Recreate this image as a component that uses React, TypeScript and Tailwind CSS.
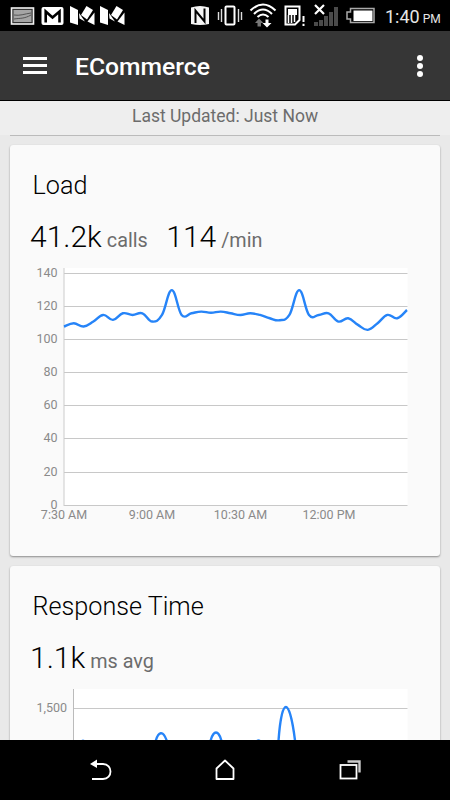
import type { ReactNode } from 'react';

type Point = [number, number];

// One sample every 10 minutes, starting at 7:30 AM
const loadSamples = [
  108, 110, 108, 111, 115, 112, 116, 115, 116, 111, 115, 130, 115, 116, 117, 116.3, 117, 116, 115, 116,
  115, 113, 111.8, 115, 130, 115, 115, 116, 111, 113, 109, 106, 110, 115, 113, 118,
];

const loadPoints: Point[] = loadSamples.map((value, i) => [64 + i * 9.8, 237.5 - value * 1.6571]);

const xLabels = [
  { x: 64, label: '7:30 AM' },
  { x: 152, label: '9:00 AM' },
  { x: 240.5, label: '10:30 AM' },
  { x: 329, label: '12:00 PM' },
];

// Catmull-Rom spline through all points
function smoothPath(points: Point[]) {
  let d = `M${points[0][0]} ${points[0][1]}`;
  for (let i = 0; i < points.length - 1; i++) {
    const p0 = points[i - 1] || points[i];
    const p1 = points[i];
    const p2 = points[i + 1];
    const p3 = points[i + 2] || p2;
    d += ` C${p1[0] + (p2[0] - p0[0]) / 5} ${p1[1] + (p2[1] - p0[1]) / 5} ${p2[0] - (p3[0] - p1[0]) / 5} ${p2[1] - (p3[1] - p1[1]) / 5} ${p2[0]} ${p2[1]}`;
  }
  return d;
}

function StatusBar() {
  return (
    <div className="h-[30px] shrink-0 bg-black flex items-center justify-between">
      <svg width="130" height="30" viewBox="0 0 130 30">
        <rect x="11.5" y="8" width="22" height="16" fill="#333" stroke="#f2f2f2" strokeWidth="1.6" />
        <rect x="13.5" y="10" width="18" height="12" fill="#a5a5a5" />
        <path d="M14 15c6 1 10-1 17-2M14 19c6-1 10 0 17-4" stroke="#555" fill="none" />
        <rect x="41.5" y="7" width="22" height="18" rx="2" fill="#fff" />
        <path d="M45.7 22.5V11.5L52.5 17.5L59.5 11.5V22.5" stroke="#000" strokeWidth="2.6" fill="none" />
        {[0, 30].map((dx) => (
          <g key={dx} transform={`translate(${dx} 0)`} fill="#fff">
            <path d="M70 6L78 10V25L70 22.5Z" />
            <path d="M86.5 6L93 10L87 19.500L81 15Z" />
            <path d="M79 13L85 21.500L79.500 18.500Z" />
            <path d="M94.5 12.5V25L87.500 21.500Z" />
          </g>
        ))}
      </svg>
      <svg width="190" height="30" viewBox="190 0 190 30" className="ml-auto">
        <path d="M191 7.500Q200 4.500 209 7.500V24Q200 26 191 24Z" fill="#f5f5f5" />
        <path d="M195.500 23V10.500L204.500 21.500V8.500" stroke="#000" strokeWidth="2" fill="none" />
        <rect x="225.500" y="6.500" width="9" height="18" rx="1" stroke="#fff" strokeWidth="2" fill="none" />
        <path d="M221.500 9v13M218.500 12v8M238.500 9v13M241.500 12v8" stroke="#ddd" strokeWidth="1.4" />
        <g stroke="#fff" strokeWidth="2.100" fill="none">
          <path d="M250.500 10.500Q263 -1.500 275.500 10.500" />
          <path d="M254 14Q263 5 272 14" />
          <path d="M257.500 17Q263 12 268.500 17" />
        </g>
        <path d="M259 18.500L263.500 23H261V26.500H257.500V23H255Z" fill="#777" />
        <path d="M267 27.500L271.500 23H268.500V19.500H265.500V23H262.500Z" fill="#fff" />
        <path d="M285.500 6.500H299.500V20L295 24.500H285.500Z" stroke="#fff" strokeWidth="2" fill="none" />
        <rect x="288" y="9" width="9" height="6" fill="#fff" />
        <path d="M288.500 15v8M291.500 15v8M294.500 15v7" stroke="#fff" strokeWidth="1.500" />
        <path d="M303.500 16v6M303.500 23.800v2.200" stroke="#fff" strokeWidth="2" />
        <g fill="#4b4b4b">
          <rect x="314" y="22" width="4" height="4" />
          <rect x="319" y="20" width="4" height="6" />
          <rect x="324" y="16" width="4" height="10" />
          <rect x="329" y="12" width="4" height="14" />
          <rect x="334" y="7" width="4" height="19" />
        </g>
        <path d="M315 5L324 14M324 5L315 14" stroke="#fff" strokeWidth="2.200" />
        <path d="M350.500 8.500H374V22.500H350.500V19H347V12H350.500Z" stroke="#aaa" strokeWidth="1.500" fill="none" />
        <rect x="353.500" y="10.500" width="19" height="10.500" fill="#fff" />
      </svg>
      <div className="w-[70px] h-[30px] pl-[5px] leading-[33px] whitespace-nowrap text-[#e6e6e6]">
        <span className="text-[18px]">1:40</span>
        <span className="ml-[3px] text-[12px]">PM</span>
      </div>
    </div>
  );
}

function AppBar() {
  return (
    <header className="h-[71px] shrink-0 bg-[#363636] border-y border-black flex items-center">
      <button className="ml-[23px] w-6 flex flex-col gap-[4px]" aria-label="Menu">
        <span className="h-[3px] w-6 bg-white" />
        <span className="h-[3px] w-6 bg-white" />
        <span className="h-[3px] w-6 bg-white" />
      </button>
      <h1 className="ml-7 pt-[2px] text-[24.7px] font-medium text-white">ECommerce</h1>
      <button className="ml-auto mr-[27px] flex flex-col gap-[2px]" aria-label="More">
        <span className="size-[6px] rounded-full bg-white" />
        <span className="size-[6px] rounded-full bg-white" />
        <span className="size-[6px] rounded-full bg-white" />
      </button>
    </header>
  );
}

function Metric({ value, unit }: { value: string; unit: string }) {
  return (
    <div className="flex items-baseline gap-[5px]">
      <span className="text-[30px] leading-9 font-light text-black">{value}</span>
      <span className="text-[19.8px] text-[#6c6c6c]">{unit}</span>
    </div>
  );
}

function Card({ title, children }: { title: string; children: ReactNode }) {
  return (
    <section className="mx-[10px] h-[411px] shrink-0 overflow-hidden rounded-[3px] bg-[#fafafa] shadow-[0_1px_2px_rgba(0,0,0,0.4)]">
      <h2 className="pl-[22.5px] pt-[25px] text-[25.2px] leading-[32px] font-light text-black">{title}</h2>
      {children}
    </section>
  );
}

function LoadChart() {
  return (
    <svg width="430" height="270" viewBox="10 0 430 270" fontSize="12.5" fill="#8a8a8a">
      <rect x="64" y="0" width="343.500" height="237" fill="#fff" />
      {[0, 20, 40, 60, 80, 100, 120, 140].map((value) => {
        const y = Math.floor(237.2 - value * 1.6571) + 0.5;
        return (
          <g key={value}>
            <line x1="64" x2="407.500" y1={y} y2={y} stroke="#c8c8c8" />
            <text x="57.500" y={y + 3.5} textAnchor="end">{value}</text>
          </g>
        );
      })}
      <line x1="64" x2="64" y1="0" y2="238" stroke="#ccc" />
      <path d={smoothPath(loadPoints)} stroke="#2684f8" strokeWidth="2.400" fill="none" />
      {xLabels.map(({ x, label }) => (
        <text key={label} x={x} y="251.3" textAnchor="middle">{label}</text>
      ))}
    </svg>
  );
}

function ResponseChart() {
  return (
    <svg width="430" height="60" viewBox="10 0 430 60" fontSize="12.5" fill="#8a8a8a">
      <rect x="74" y="0" width="333.500" height="60" fill="#fff" />
      <line x1="74" x2="407.500" y1="19.500" y2="19.500" stroke="#c8c8c8" />
      <line x1="73.500" x2="73.500" y1="0" y2="60" stroke="#bbb" />
      <text x="67" y="23" textAnchor="end">1,500</text>
      <path
        d="M81 53Q83 50.500 85 53M154 60C157 41 164 37 169 60M209 60C212 38 220 38 223 60M256 53Q258.500 50 261 53M278 60C281 4 290 4 296 60"
        stroke="#2684f8"
        strokeWidth="2.400"
        fill="none"
      />
    </svg>
  );
}

function NavBar() {
  return (
    <nav className="h-[60px] shrink-0 bg-black">
      <svg width="450" height="60" viewBox="0 0 450 60" fill="none" stroke="#fff" strokeWidth="1.800">
        <path d="M96 24H103C113 24 113 39 103 39H92" />
        <path d="M90 24L97 19.500V28Z" fill="#fff" stroke="none" />
        <path d="M216.500 39V28.500L225 20.500L233.500 28.500V39Z" strokeLinejoin="round" />
        <rect x="340.500" y="25" width="16" height="13.500" />
        <path d="M347.500 21.500H359.500V32.500" stroke="#ccc" strokeWidth="2.400" />
      </svg>
    </nav>
  );
}

export default function App() {
  return (
    <div className="w-[450px] h-[800px] overflow-hidden flex flex-col bg-black font-['Roboto',sans-serif]">
      <StatusBar />
      <AppBar />
      <main className="flex-1 min-h-0 overflow-hidden flex flex-col bg-[#e9e9e9]">
        <div className="h-[34px] shrink-0 bg-[#eee]">
          <p className="text-center text-[17.5px] leading-[31px] text-[#6c6c6c]">Last Updated: Just Now</p>
        </div>
        <div className="mx-[10px] mb-[9px] h-px shrink-0 bg-[#bbb]" />
        <Card title="Load">
          <div className="pl-5 pt-[17px] h-[66px] flex gap-[18.5px]">
            <Metric value="41.2k" unit="calls" />
            <Metric value="114" unit="/min" />
          </div>
          <LoadChart />
        </Card>
        <div className="h-[10px] shrink-0" />
        <Card title="Response Time">
          <div className="pl-5 pt-[17px] h-[66px] flex">
            <Metric value="1.1k" unit="ms avg" />
          </div>
          <ResponseChart />
        </Card>
      </main>
      <NavBar />
    </div>
  );
}
